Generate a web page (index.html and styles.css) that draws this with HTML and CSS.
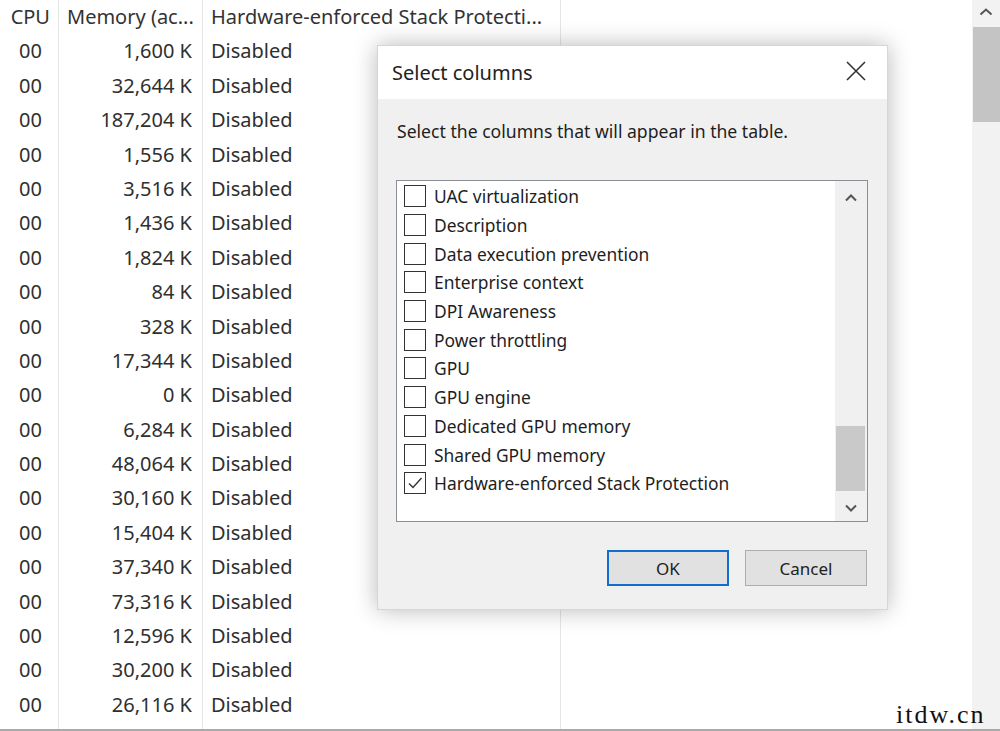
FILE: index.html
```html
<!DOCTYPE html>
<html>
<head>
<meta charset="utf-8">
<link rel="stylesheet" href="styles.css">
</head>
<body>
<div class="page">
  <div class="main">
    <div class="table">
      <div class="row head">
        <div class="c1">CPU</div>
        <div class="c2">Memory (ac...</div>
        <div class="c3">Hardware-enforced Stack Protecti...</div>
        <div class="c4"></div>
      </div>
      <div class="row"><div class="c1">00</div><div class="c2">1,600 K</div><div class="c3">Disabled</div><div class="c4"></div></div>
      <div class="row"><div class="c1">00</div><div class="c2">32,644 K</div><div class="c3">Disabled</div><div class="c4"></div></div>
      <div class="row"><div class="c1">00</div><div class="c2">187,204 K</div><div class="c3">Disabled</div><div class="c4"></div></div>
      <div class="row"><div class="c1">00</div><div class="c2">1,556 K</div><div class="c3">Disabled</div><div class="c4"></div></div>
      <div class="row"><div class="c1">00</div><div class="c2">3,516 K</div><div class="c3">Disabled</div><div class="c4"></div></div>
      <div class="row"><div class="c1">00</div><div class="c2">1,436 K</div><div class="c3">Disabled</div><div class="c4"></div></div>
      <div class="row"><div class="c1">00</div><div class="c2">1,824 K</div><div class="c3">Disabled</div><div class="c4"></div></div>
      <div class="row"><div class="c1">00</div><div class="c2">84 K</div><div class="c3">Disabled</div><div class="c4"></div></div>
      <div class="row"><div class="c1">00</div><div class="c2">328 K</div><div class="c3">Disabled</div><div class="c4"></div></div>
      <div class="row"><div class="c1">00</div><div class="c2">17,344 K</div><div class="c3">Disabled</div><div class="c4"></div></div>
      <div class="row"><div class="c1">00</div><div class="c2">0 K</div><div class="c3">Disabled</div><div class="c4"></div></div>
      <div class="row"><div class="c1">00</div><div class="c2">6,284 K</div><div class="c3">Disabled</div><div class="c4"></div></div>
      <div class="row"><div class="c1">00</div><div class="c2">48,064 K</div><div class="c3">Disabled</div><div class="c4"></div></div>
      <div class="row"><div class="c1">00</div><div class="c2">30,160 K</div><div class="c3">Disabled</div><div class="c4"></div></div>
      <div class="row"><div class="c1">00</div><div class="c2">15,404 K</div><div class="c3">Disabled</div><div class="c4"></div></div>
      <div class="row"><div class="c1">00</div><div class="c2">37,340 K</div><div class="c3">Disabled</div><div class="c4"></div></div>
      <div class="row"><div class="c1">00</div><div class="c2">73,316 K</div><div class="c3">Disabled</div><div class="c4"></div></div>
      <div class="row"><div class="c1">00</div><div class="c2">12,596 K</div><div class="c3">Disabled</div><div class="c4"></div></div>
      <div class="row"><div class="c1">00</div><div class="c2">30,200 K</div><div class="c3">Disabled</div><div class="c4"></div></div>
      <div class="row"><div class="c1">00</div><div class="c2">26,116 K</div><div class="c3">Disabled</div><div class="c4"></div></div>
      <div class="row filler"><div class="c1"></div><div class="c2"></div><div class="c3"></div><div class="c4"></div></div>
    </div>

    <div class="dialog">
      <div class="titlebar">
        <span class="title">Select columns</span>
        <svg class="close" width="20" height="20" viewBox="0 0 20 20"><path d="M1 1 L19 19 M19 1 L1 19" stroke="#333" stroke-width="1.6" fill="none"/></svg>
      </div>
      <div class="dbody">
        <p class="hint">Select the columns that will appear in the table.</p>
        <div class="listbox">
          <div class="items">
            <div class="item"><span class="cb"></span><span>UAC virtualization</span></div>
            <div class="item"><span class="cb"></span><span>Description</span></div>
            <div class="item"><span class="cb"></span><span>Data execution prevention</span></div>
            <div class="item"><span class="cb"></span><span>Enterprise context</span></div>
            <div class="item"><span class="cb"></span><span>DPI Awareness</span></div>
            <div class="item"><span class="cb"></span><span>Power throttling</span></div>
            <div class="item"><span class="cb"></span><span>GPU</span></div>
            <div class="item"><span class="cb"></span><span>GPU engine</span></div>
            <div class="item"><span class="cb"></span><span>Dedicated GPU memory</span></div>
            <div class="item"><span class="cb"></span><span>Shared GPU memory</span></div>
            <div class="item"><span class="cb"><svg width="20" height="20" viewBox="0 0 20 20"><path d="M4 10.5 L8 14.5 L16.5 5" stroke="#333" stroke-width="1.4" fill="none"/></svg></span><span>Hardware-enforced Stack Protection</span></div>
          </div>
          <div class="lscroll">
            <svg class="arrow" width="14" height="10" viewBox="0 0 14 10"><path d="M2 7.5 L7 2.5 L12 7.5" stroke="#555" stroke-width="2" fill="none"/></svg>
            <div class="ltrack"><div class="lthumb"></div></div>
            <svg class="arrow" width="14" height="10" viewBox="0 0 14 10"><path d="M2 2.5 L7 7.5 L12 2.5" stroke="#555" stroke-width="2" fill="none"/></svg>
          </div>
        </div>
        <div class="buttons">
          <button class="btn primary">OK</button>
          <button class="btn">Cancel</button>
        </div>
      </div>
    </div>
  </div>
  <div class="vscroll">
    <svg class="varrow" width="16" height="10" viewBox="0 0 16 10"><path d="M2.5 7.5 L8 2.5 L13.5 7.5" stroke="#555" stroke-width="2" fill="none"/></svg>
    <div class="vthumb"></div>
  </div>
  <div class="watermark">itdw.cn</div>
</div>
</body>
</html>
```

FILE: styles.css
```css
* { box-sizing: border-box; }
html, body { margin: 0; padding: 0; }
body {
  width: 1000px;
  height: 731px;
  overflow: hidden;
  background: #ffffff;
  font-family: "Noto Sans", "Open Sans", sans-serif;
}
.page {
  position: relative;
  display: flex;
  width: 1000px;
  height: 731px;
  border-bottom: 2px solid #a9a9a9;
}
.main {
  position: relative;
  flex: 1;
  height: 100%;
}
.table {
  display: flex;
  flex-direction: column;
  height: 100%;
}
.row {
  display: flex;
  height: 34.4px;
  align-items: stretch;
  font-size: 20px;
  color: #2f2f2f;
  line-height: 34.4px;
  white-space: nowrap;
}
.row.filler { flex: 1; }
.c1, .c2, .c3 { border-right: 1px solid #e6e6e6; overflow: hidden; }
.c1 { width: 59px; text-align: right; padding-right: 16px; }
.c2 { width: 144px; text-align: right; padding-right: 10px; }
.c3 { width: 358px; padding-left: 8px; }
.c4 { flex: 1; }
.head .c1 { padding-right: 8px; }
.head .c2 { text-align: left; padding-left: 8px; padding-right: 0; }
.head { color: #333; }

.vscroll {
  width: 28px;
  height: 100%;
  background: #f2f2f2;
  display: flex;
  flex-direction: column;
  align-items: stretch;
}
.varrow { display: block; margin: 7px auto 10px; }
.vthumb { height: 95px; background: #c4c4c4; margin-left: 1px; }

.dialog {
  position: absolute;
  left: 377px;
  top: 45px;
  width: 511px;
  height: 565px;
  background: #f0f0f0;
  border: 1px solid #d6d6d6;
  box-shadow: 0 0 22px rgba(0, 0, 0, 0.28);
  display: flex;
  flex-direction: column;
}
.titlebar {
  height: 53px;
  background: #ffffff;
  display: flex;
  align-items: center;
  justify-content: space-between;
  padding: 0 21px 0 14px;
}
.title { font-size: 20px; color: #222; }
.close { display: block; margin-top: -4px; }
.dbody {
  flex: 1;
  display: flex;
  flex-direction: column;
  padding: 0 20px 0 18px;
}
.hint {
  margin: 20px 0 0 1px;
  font-size: 17.6px;
  color: #1e1e1e;
  line-height: 24px;
}
.listbox {
  margin-top: 37px;
  height: 342px;
  width: 472px;
  border: 1px solid #8a8f96;
  background: #ffffff;
  display: flex;
}
.items {
  flex: 1;
  padding: 1px 0 0 7px;
}
.item {
  height: 28.7px;
  display: flex;
  align-items: center;
  gap: 8px;
  font-size: 17.4px;
  color: #1e1e1e;
}
.cb {
  width: 22px;
  height: 22px;
  border: 1px solid #333;
  background: #fff;
  display: flex;
  align-items: center;
  justify-content: center;
}
.cb svg { display: block; }
.lscroll {
  width: 32px;
  background: #f0f0f0;
  display: flex;
  flex-direction: column;
  align-items: center;
  padding: 12px 0 8px;
}
.lscroll .arrow { display: block; }
.ltrack {
  flex: 1;
  width: 100%;
  display: flex;
  flex-direction: column;
  justify-content: flex-end;
  padding: 0 2px 12px 1px;
}
.lthumb { height: 65px; background: #c9c9c9; }
.buttons {
  display: flex;
  justify-content: flex-end;
  gap: 16px;
  margin-top: 28px;
  padding-right: 0;
}
.btn {
  width: 122px;
  height: 36px;
  background: #e1e1e1;
  border: 1px solid #adadad;
  font-family: "Noto Sans", "Open Sans", sans-serif;
  font-size: 17px;
  color: #222;
  padding: 0;
}
.btn.primary { border: 2px solid #0f6ed0; }

.watermark {
  position: absolute;
  left: 896px;
  top: 700px;
  font-family: "Liberation Serif", serif;
  font-size: 26px;
  letter-spacing: 2px;
  color: #111;
  white-space: nowrap;
  line-height: 30px;
}
```
